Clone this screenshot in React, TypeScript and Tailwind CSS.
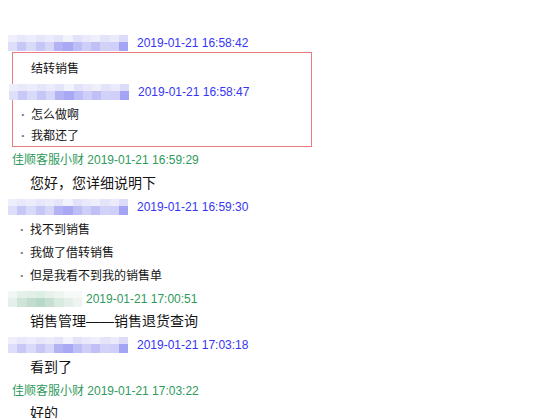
import React from "react";

const font = "font-['Liberation_Sans','Noto_Sans_CJK_SC',sans-serif]";

// mosaic blur standing in for the hidden nick names
const blueTop = ["#eeeefc", "#e8e8fb", "#ececfc", "#e6e6fb", "#ebebfc", "#e4e4fa", "#f2f2fd", "#e2e2fa", "#e9e9fb", "#efeffc", "#e3e3fa", "#eaeafb", "#dcdcfa"];
const blueBot = ["#dedefb", "#c8c8f8", "#d9d9fa", "#c6c6f7", "#d6d6f9", "#b2b2f5", "#a8a8f4", "#bebef7", "#ceceF8", "#c0c0f7", "#d2d2f9", "#cfcff9", "#a4a4f4"];
const greenTop = ["#f2f7f4", "#e6f0ea", "#e2eee7", "#ddeee4", "#e8f2ec", "#eef5f1", "#f5f9f7", "#f5f9f7"];
const greenBot = ["#e6f0ea", "#cfe3d8", "#c2ddcf", "#b9d9c7", "#c8e0d3", "#d9ebe1", "#e4efe9", "#eef5f1"];

function Mosaic({ top, bot, w }: { top: string[]; bot: string[]; w: string }) {
  return (
    <div className={`flex flex-col ${w}`}>
      <div className="flex">
        {top.map((c, i) => (
          <div key={i} className="flex-1 h-[7px]" style={{ background: c }} />
        ))}
      </div>
      <div className="flex">
        {bot.map((c, i) => (
          <div key={i} className="flex-1 h-[9px]" style={{ background: c }} />
        ))}
      </div>
    </div>
  );
}

function UserHead({ time, green }: { time: string; green?: boolean }) {
  return (
    <div className="h-[23px] flex items-center pl-[8px]">
      {green ? (
        <Mosaic top={greenTop} bot={greenBot} w="w-[74px]" />
      ) : (
        <Mosaic top={blueTop} bot={blueBot} w="w-[120px]" />
      )}
      <span className={`text-[12px] ${green ? "ml-[4px] text-[#2f9a5c]" : "ml-[9px] text-[#3535f2]"}`}>{time}</span>
    </div>
  );
}

function ServiceHead({ time }: { time: string }) {
  return (
    <div className="h-[23px] flex items-center pl-[12px] text-[12px] text-[#2f9a5c]">
      佳顺客服小财 {time}
    </div>
  );
}

function Line({ text, bullet, big, h = "h-[23px]" }: { text: string; bullet?: boolean; big?: boolean; h?: string }) {
  return (
    <div className={`${h} flex items-center text-[#151515]`}>
      {bullet ? (
        <span className="w-[30px] pl-[20px] text-[#777] text-[13px] font-bold">·</span>
      ) : (
        <span className="w-[30px]" />
      )}
      <span className={big ? "text-[14px]" : "text-[12px]"}>{text}</span>
    </div>
  );
}

export default function App() {
  return (
    <div className={`w-[554px] h-[418px] overflow-hidden bg-white ${font}`}>
      <div className="pt-[34px]">
        <div className="h-[18px] flex items-center pl-[8px]">
          <Mosaic top={blueTop} bot={blueBot} w="w-[120px]" />
          <span className="ml-[9px] text-[12px] text-[#3535f2]">2019-01-21 16:58:42</span>
        </div>
        <div className="ml-[12px] w-[300px] border border-[#ee7b7b] pt-[4px]">
          <div className="-ml-[12px]">
            <Line text="结转销售" />
            <UserHead time="2019-01-21 16:58:47" />
            <Line text="怎么做啊" bullet />
            <Line text="我都还了" bullet h="h-[20px]" />
          </div>
        </div>
        <div className="h-[25px] flex items-center pl-[12px] text-[12px] text-[#2f9a5c]">
          佳顺客服小财 2019-01-21 16:59:29
        </div>
        <Line text="您好，您详细说明下" big />
        <UserHead time="2019-01-21 16:59:30" />
        <Line text="找不到销售" bullet />
        <Line text="我做了借转销售" bullet />
        <Line text="但是我看不到我的销售单" bullet />
        <UserHead time="2019-01-21 17:00:51" green />
        <Line text="销售管理——销售退货查询" big />
        <UserHead time="2019-01-21 17:03:18" />
        <Line text="看到了" big />
        <ServiceHead time="2019-01-21 17:03:22" />
        <Line text="好的" big />
      </div>
    </div>
  );
}
